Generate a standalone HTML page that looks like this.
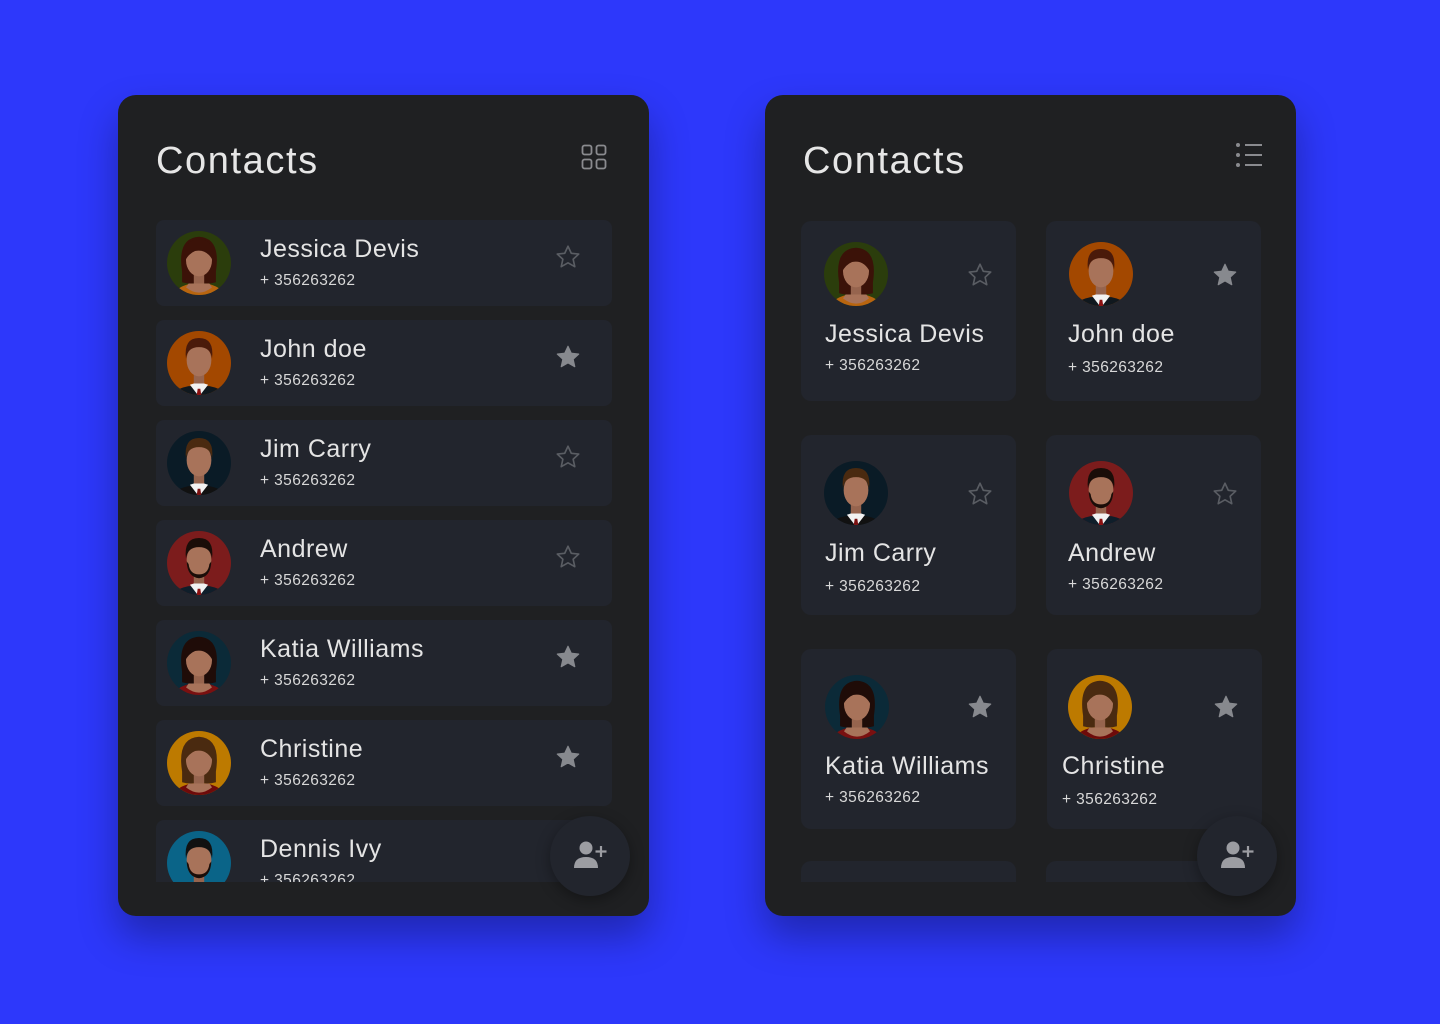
<!DOCTYPE html>
<html><head><meta charset="utf-8"><style>
*{margin:0;padding:0;box-sizing:border-box}
body{width:1440px;height:1024px;background:#2d38fb;font-family:"Liberation Sans",sans-serif;position:relative;overflow:hidden}
.panel{position:absolute;top:95px;width:531px;height:821px;background:#1f2022;border-radius:18px;box-shadow:0 20px 40px rgba(0,0,0,.3);overflow:hidden}
.title{position:absolute;left:38px;top:45px;font-size:38px;color:#e6e6e6;letter-spacing:1.6px}
.clip{position:absolute;left:0;top:0;width:531px;height:787px;overflow:hidden}
.row{position:absolute;left:38px;width:456px;height:86px;background:#22252d;border-radius:8px}
.row .av{position:absolute;left:11px;top:11px}
.av{width:64px;height:64px;border-radius:50%;overflow:hidden}
.av svg{width:64px;height:64px;display:block}
.nm{letter-spacing:.5px}
.ph{letter-spacing:.4px}
.row .nm{position:absolute;left:104px;top:15px;font-size:25px;color:#e4e4e4}
.row .ph{position:absolute;left:104px;top:52px;font-size:15.5px;color:#d8d8d8}
.st{position:absolute;width:28px;height:28px}
.row .st{left:398px;top:23px}
.card{position:absolute;width:215px;height:180px;background:#22252d;border-radius:10px}
.card .av{position:absolute;left:23px;top:21px}
.card .nm{position:absolute;left:24px;top:99px;font-size:25px;color:#e4e4e4}
.card .ph{position:absolute;left:24px;top:136px;font-size:15.5px;color:#d8d8d8}
.card .st{left:165px;top:40px}
.fab{position:absolute;width:80px;height:80px;border-radius:50%;background:#22252d;box-shadow:0 4px 14px rgba(0,0,0,.35)}
.fab svg{position:absolute;left:22px;top:22px}
</style></head><body>
<svg width="0" height="0" style="position:absolute">
<defs>
<symbol id="fem" viewBox="0 0 64 64"><g transform="translate(32 33) scale(1.3) translate(-32 -32)">
<path d="M19 38 Q15 12 32 11 Q49 12 45 38 L45 46 Q38 48 32 46 Q26 48 19 46 Z" fill="var(--hair)"/>
<rect x="28" y="38" width="8" height="10" fill="#96644e"/>
<path d="M8 64 Q11 50 26 47 L38 47 Q53 50 56 64 Z" fill="var(--shirt)"/>
<path d="M22 50 Q32 58 42 50 L40 47 L24 47 Z" fill="#a8735a"/>
<ellipse cx="32" cy="29" rx="10" ry="12.5" fill="#a8735a"/>
<path d="M21 30 Q20 13 32 13 Q44 13 43 30 Q38 20 29 22 Q24 24 21 30Z" fill="var(--hair)"/>
</g></symbol>
<symbol id="mal" viewBox="0 0 64 64"><g transform="translate(32 33) scale(1.3) translate(-32 -32)">
<rect x="28" y="38" width="8" height="12" fill="#96644e"/>
<path d="M4 64 Q9 52 24 49 L40 49 Q55 52 60 64 Z" fill="var(--suit)"/>
<path d="M25 48 L32 57 L39 48 L36 47 L28 47 Z" fill="#f2f2f2"/>
<path d="M31 51 L33 51 L34.5 61 L32 64 L29.5 61 Z" fill="var(--tie)"/>
<ellipse cx="32" cy="29" rx="9.5" ry="12.5" fill="#a8735a"/>
<path d="M22 28 Q20 12 32 12 Q44 12 42 28 Q41 19 32 19 Q23 19 22 28Z" fill="var(--hair)"/>
<path d="M22.5 30 Q23 42 32 43 Q41 42 41.5 30 L40 32 Q39 40 32 40 Q25 40 24 32Z" fill="var(--beard,transparent)"/>
</g></symbol>
<symbol id="so" viewBox="0 0 24 24"><path d="M12 2.8l2.8 6 6.4.7-4.8 4.4 1.4 6.4L12 17l-5.8 3.3 1.4-6.4-4.8-4.4 6.4-.7z" fill="none" stroke="#5a5d63" stroke-width="1.4" stroke-linejoin="round"/></symbol>
<symbol id="sf" viewBox="0 0 24 24"><path d="M12 2.8l2.8 6 6.4.7-4.8 4.4 1.4 6.4L12 17l-5.8 3.3 1.4-6.4-4.8-4.4 6.4-.7z" fill="#87898e" stroke="#87898e" stroke-width="1" stroke-linejoin="round"/></symbol>
<symbol id="add" viewBox="0 0 36 36"><circle cx="14" cy="10" r="6.5" fill="#9c9da2"/><path d="M2 30 Q2 19 14 19 Q26 19 26 30 Z" fill="#9c9da2"/><path d="M29 8v11M23.5 13.5h11" stroke="#9c9da2" stroke-width="2.2"/></symbol>
</defs></svg>

<!-- LEFT PANEL -->
<div class="panel" style="left:118px">
<div class="title">Contacts</div>
<svg style="position:absolute;left:463px;top:49px" width="26" height="26" viewBox="0 0 26 26" fill="none" stroke="#8a8b8f" stroke-width="1.8"><rect x="1.5" y="1.5" width="9" height="9" rx="2"/><rect x="15.5" y="1.5" width="9" height="9" rx="2"/><rect x="1.5" y="15.5" width="9" height="9" rx="2"/><rect x="15.5" y="15.5" width="9" height="9" rx="2"/></svg>
<div class="clip">
<div class="row" style="top:125px"><div class="av" style="background:#2b3d0c"><svg viewBox="0 0 64 64" style="--hair:#3b1208;--shirt:#b8650f"><use href="#fem" x="0" y="0" width="64" height="64"/></svg></div><div class="nm">Jessica Devis</div><div class="ph">+ 356263262</div><svg class="st"><use href="#so"/></svg></div>
<div class="row" style="top:225px"><div class="av" style="background:#a34800"><svg viewBox="0 0 64 64" style="--hair:#4a1a0a;--suit:#10181e;--tie:#8b1010"><use href="#mal" x="0" y="0" width="64" height="64"/></svg></div><div class="nm">John doe</div><div class="ph">+ 356263262</div><svg class="st"><use href="#sf"/></svg></div>
<div class="row" style="top:325px"><div class="av" style="background:#0a1b26"><svg viewBox="0 0 64 64" style="--hair:#4a2a10;--suit:#111;--tie:#7a1010"><use href="#mal" x="0" y="0" width="64" height="64"/></svg></div><div class="nm">Jim Carry</div><div class="ph">+ 356263262</div><svg class="st"><use href="#so"/></svg></div>
<div class="row" style="top:425px"><div class="av" style="background:#7c1c1c"><svg viewBox="0 0 64 64" style="--hair:#1a0d08;--suit:#0f1e2a;--tie:#8b1010;--beard:#1a0d08"><use href="#mal" x="0" y="0" width="64" height="64"/></svg></div><div class="nm">Andrew</div><div class="ph">+ 356263262</div><svg class="st"><use href="#so"/></svg></div>
<div class="row" style="top:525px"><div class="av" style="background:#0b2a38"><svg viewBox="0 0 64 64" style="--hair:#1f0c08;--shirt:#7a1010"><use href="#fem" x="0" y="0" width="64" height="64"/></svg></div><div class="nm">Katia Williams</div><div class="ph">+ 356263262</div><svg class="st"><use href="#sf"/></svg></div>
<div class="row" style="top:625px"><div class="av" style="background:#bd7a00"><svg viewBox="0 0 64 64" style="--hair:#4a2a10;--shirt:#6e0a0a"><use href="#fem" x="0" y="0" width="64" height="64"/></svg></div><div class="nm">Christine</div><div class="ph">+ 356263262</div><svg class="st"><use href="#sf"/></svg></div>
<div class="row" style="top:725px"><div class="av" style="background:#0a6488"><svg viewBox="0 0 64 64" style="--hair:#111;--suit:#2a1010;--tie:#b86a10;--beard:#1a0d08"><use href="#mal" x="0" y="0" width="64" height="64"/></svg></div><div class="nm">Dennis Ivy</div><div class="ph">+ 356263262</div></div>
</div>
<div class="fab" style="left:432px;top:721px"><svg width="36" height="36"><use href="#add"/></svg></div>
</div>

<!-- RIGHT PANEL -->
<div class="panel" style="left:765px">
<div class="title">Contacts</div>
<svg style="position:absolute;left:470px;top:47px" width="28" height="26" viewBox="0 0 28 26"><g fill="#8a8b8f"><circle cx="3" cy="3" r="2"/><circle cx="3" cy="13" r="2"/><circle cx="3" cy="23" r="2"/></g><g stroke="#8a8b8f" stroke-width="2"><path d="M10 3h17M10 13h17M10 23h17"/></g></svg>
<div class="clip">
<div class="card" style="left:36px;top:126px"><div class="av" style="background:#2b3d0c"><svg viewBox="0 0 64 64" style="--hair:#3b1208;--shirt:#b8650f"><use href="#fem" x="0" y="0" width="64" height="64"/></svg></div><svg class="st"><use href="#so"/></svg><div class="nm">Jessica Devis</div><div class="ph">+ 356263262</div></div>
<div class="card" style="left:281px;top:126px"><div class="av" style="background:#a34800"><svg viewBox="0 0 64 64" style="--hair:#4a1a0a;--suit:#10181e;--tie:#8b1010"><use href="#mal" x="0" y="0" width="64" height="64"/></svg></div><svg class="st"><use href="#sf"/></svg><div class="nm" style="left:22px">John doe</div><div class="ph" style="left:22px;top:138px">+ 356263262</div></div>
<div class="card" style="left:36px;top:340px"><div class="av" style="top:26px;background:#0a1b26"><svg viewBox="0 0 64 64" style="--hair:#4a2a10;--suit:#111;--tie:#7a1010"><use href="#mal" x="0" y="0" width="64" height="64"/></svg></div><svg class="st" style="top:45px"><use href="#so"/></svg><div class="nm" style="top:104px">Jim Carry</div><div class="ph" style="top:143px">+ 356263262</div></div>
<div class="card" style="left:281px;top:340px"><div class="av" style="top:26px;background:#7c1c1c"><svg viewBox="0 0 64 64" style="--hair:#1a0d08;--suit:#0f1e2a;--tie:#8b1010;--beard:#1a0d08"><use href="#mal" x="0" y="0" width="64" height="64"/></svg></div><svg class="st" style="top:45px"><use href="#so"/></svg><div class="nm" style="left:22px;top:104px">Andrew</div><div class="ph" style="left:22px;top:141px">+ 356263262</div></div>
<div class="card" style="left:36px;top:554px"><div class="av" style="left:24px;top:26px;background:#0b2a38"><svg viewBox="0 0 64 64" style="--hair:#1f0c08;--shirt:#7a1010"><use href="#fem" x="0" y="0" width="64" height="64"/></svg></div><svg class="st" style="top:44px"><use href="#sf"/></svg><div class="nm" style="top:103px">Katia Williams</div><div class="ph" style="top:140px">+ 356263262</div></div>
<div class="card" style="left:282px;top:554px"><div class="av" style="left:21px;top:26px;background:#bd7a00"><svg viewBox="0 0 64 64" style="--hair:#4a2a10;--shirt:#6e0a0a"><use href="#fem" x="0" y="0" width="64" height="64"/></svg></div><svg class="st" style="top:44px"><use href="#sf"/></svg><div class="nm" style="left:15px;top:103px">Christine</div><div class="ph" style="left:15px;top:142px">+ 356263262</div></div>
<div class="card" style="left:36px;top:766px"></div>
<div class="card" style="left:281px;top:766px"></div>
</div>
<div class="fab" style="left:432px;top:721px"><svg width="36" height="36"><use href="#add"/></svg></div>
</div>
</body></html>
